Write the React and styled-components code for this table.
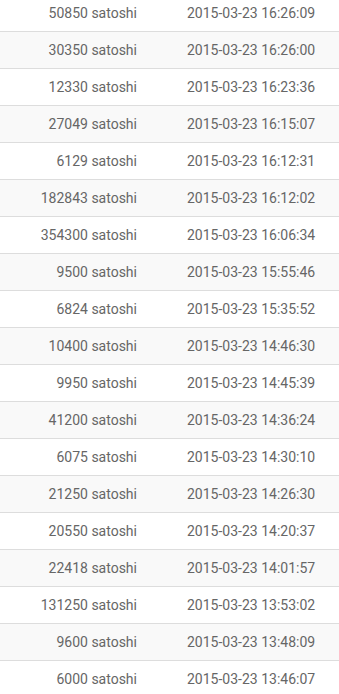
import React from "react";
import styled, { createGlobalStyle } from "styled-components";

const Global = createGlobalStyle`
  html, body { margin: 0; padding: 0; background: #fff; }
  body { font-family: Roboto, "Liberation Sans", sans-serif; font-size: 14px; color: #666; }
`;

const Table = styled.div`
  margin-top: -6px;
  display: flex;
  flex-direction: column;
`;

const Row = styled.div`
  display: grid;
  grid-template-columns: 145px 1fr;
  column-gap: 34px;
  border-top: 1px solid #ddd;
  background: ${(p) => (p.$striped ? "#f9f9f9" : "#fff")};
  line-height: 20px;
`;

const Amount = styled.div`
  padding: 8px;
  text-align: right;
  white-space: nowrap;
`;

const Time = styled.div`
  padding: 8px;
  white-space: nowrap;
`;

const rows = [
  ["50850", "16:26:09"],
  ["30350", "16:26:00"],
  ["12330", "16:23:36"],
  ["27049", "16:15:07"],
  ["6129", "16:12:31"],
  ["182843", "16:12:02"],
  ["354300", "16:06:34"],
  ["9500", "15:55:46"],
  ["6824", "15:35:52"],
  ["10400", "14:46:30"],
  ["9950", "14:45:39"],
  ["41200", "14:36:24"],
  ["6075", "14:30:10"],
  ["21250", "14:26:30"],
  ["20550", "14:20:37"],
  ["22418", "14:01:57"],
  ["131250", "13:53:02"],
  ["9600", "13:48:09"],
  ["6000", "13:46:07"],
];

export default function App() {
  return (
    <>
      <Global />
      <Table>
        {rows.map(([amt, t], i) => (
          <Row key={i} $striped={i % 2 === 1}>
            <Amount>{amt} satoshi</Amount>
            <Time>2015-03-23 {t}</Time>
          </Row>
        ))}
      </Table>
    </>
  );
}
